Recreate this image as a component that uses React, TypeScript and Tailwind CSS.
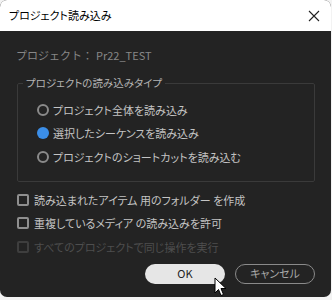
import React from 'react';

const jp = "font-['Noto_Sans_CJK_JP','Noto_Sans',sans-serif] [font-feature-settings:'palt']";

const Radio: React.FC<{ checked?: boolean; label: string }> = ({ checked, label }) => (
  <div className="flex items-center h-[23.5px]">
    {checked ? (
      <span className="w-[12px] h-[12px] rounded-full bg-[#3b8ee8] mr-[4px]" />
    ) : (
      <span className="w-[12px] h-[12px] rounded-full border-2 border-[#8a8a8a] mr-[4px]" />
    )}
    <span className="text-[11px] text-[#c4c4c4]">{label}</span>
  </div>
);

const Check: React.FC<{ label: string; disabled?: boolean }> = ({ label, disabled }) => (
  <div className="flex items-center h-[23.5px]">
    <span
      className={`w-[12px] h-[12px] rounded-[2px] border-2 mr-[5px] ${
        disabled ? 'border-[#3e3e3e]' : 'border-[#8f8f8f]'
      }`}
    />
    <span className={`text-[11px] ${disabled ? 'text-[#4e4e4e]' : 'text-[#c4c4c4]'}`}>{label}</span>
  </div>
);

const App: React.FC = () => {
  return (
    <div className={`w-[332px] h-[300px] bg-[#f3f3f3] ${jp}`}>
      <div className="w-[331px] h-[297px] rounded-[7px] overflow-hidden flex flex-col bg-[#232323]">
        {/* タイトルバー */}
        <div className="h-[31px] bg-white flex items-center justify-between pl-[9px] pr-[10px]">
          <span className="text-[11px] text-black">プロジェクト読み込み</span>
          <svg width="12" height="12" viewBox="0 0 12 12" className="mr-[1px]">
            <path d="M1 1 L11 11 M11 1 L1 11" stroke="#222" strokeWidth="1.1" />
          </svg>
        </div>

        {/* 本文 */}
        <div className="flex-1 px-[16px] pt-[16px]">
          <div className="text-[11px] text-[#878787] h-[16px] flex items-center [font-feature-settings:normal]">
            <span>プロジェクト：</span>
            <span className="ml-[3px]">Pr22_TEST</span>
          </div>

          <fieldset className="mt-[12px] border border-[#3a3a3a] rounded-[2px] w-[298px] h-[107px] pl-[19px] pt-[7px] ml-[1px]">
            <legend className="text-[10.5px] leading-[16px] text-[#b4b4b4] px-[3px] -ml-[14px]">
              プロジェクトの読み込みタイプ
            </legend>
            <Radio label="プロジェクト全体を読み込み" />
            <Radio checked label="選択したシーケンスを読み込み" />
            <Radio label="プロジェクトのショートカットを読み込む" />
          </fieldset>

          <div className="mt-[6px] ml-[1px] flex flex-col">
            <Check label="読み込まれたアイテム 用のフォルダー を作成" />
            <Check label="重複しているメディア の読み込みを許可" />
            <Check disabled label="すべてのプロジェクトで同じ操作を実行" />
          </div>

          <div className="flex justify-end gap-[10px] mt-[5px]">
            <button className="relative w-[80px] h-[20px] rounded-full bg-[#e6e6e6] text-[11px] text-[#222]">
              OK
              <svg width="14" height="20" viewBox="0 0 14 20" className="absolute left-[69px] top-[13px]">
                <path d="M1 1 L1 16 L4.5 12.5 L7 18.5 L9.5 17.5 L7 11.5 L12 11.5 Z" fill="#fff" stroke="#000" strokeWidth="1" />
              </svg>
            </button>
            <button className="w-[80px] h-[20px] rounded-full border border-[#8a8a8a] text-[11px] text-[#a8a8a8]">
              キャンセル
            </button>
          </div>
        </div>
      </div>
    </div>
  );
};

export default App;
